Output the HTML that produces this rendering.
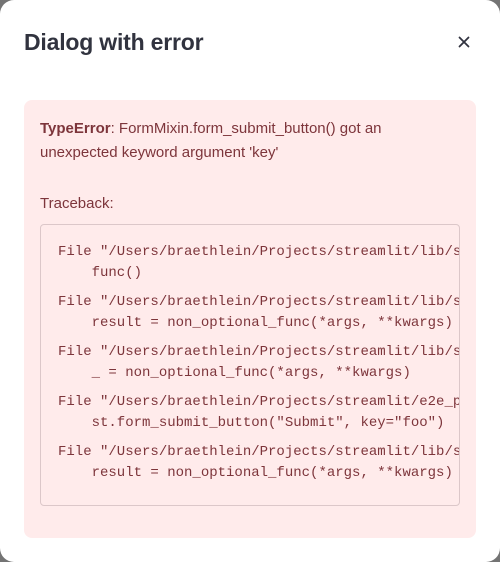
<!DOCTYPE html>
<html><head><style>
html,body{margin:0;padding:0;width:500px;height:562px;background:#747474;overflow:hidden}
.dlg{position:absolute;left:0;top:0;width:500px;height:562px;background:#fff;border-radius:14px}
h1{position:absolute;left:24px;top:27px;margin:0;font:bold 23px/30px "Liberation Sans",sans-serif;color:#31333f;letter-spacing:-0.2px}
.x{position:absolute;left:457px;top:35px;width:14px;height:14px}
.err{position:absolute;left:24px;top:100px;width:452px;height:438px;background:#ffebeb;border-radius:8px;color:#7d353b;font:15px/24px "Liberation Sans",sans-serif}
.msg{position:absolute;left:16px;top:17px;width:420px}
.tb{position:absolute;left:16px;top:92px}
.code{position:absolute;left:16px;top:124px;width:418px;height:280px;border:1px solid #dcc7c9;border-radius:4px;overflow:hidden}
pre{margin:0;position:absolute;left:17px;top:17px;font:14px/21px "Liberation Mono",monospace;color:#7d353b;white-space:pre}
.g{margin-bottom:8px}
</style></head><body>
<div class="dlg">
<h1>Dialog with error</h1>
<svg class="x" viewBox="0 0 14 14"><path d="M2.5 2.5L11.5 11.5M11.5 2.5L2.5 11.5" stroke="#31333f" stroke-width="1.8" stroke-linecap="round"/></svg>
<div class="err">
<div class="msg"><b>TypeError</b>: FormMixin.form_submit_button() got an unexpected keyword argument 'key'</div>
<div class="tb">Traceback:</div>
<div class="code"><pre><div class="g">File "/Users/braethlein/Projects/streamlit/lib/s
    func()</div><div class="g">File "/Users/braethlein/Projects/streamlit/lib/s
    result = non_optional_func(*args, **kwargs)</div><div class="g">File "/Users/braethlein/Projects/streamlit/lib/s
    _ = non_optional_func(*args, **kwargs)</div><div class="g">File "/Users/braethlein/Projects/streamlit/e2e_p
    st.form_submit_button("Submit", key="foo")</div><div class="g">File "/Users/braethlein/Projects/streamlit/lib/s
    result = non_optional_func(*args, **kwargs)</div></pre></div>
</div>
</div>
</body></html>
